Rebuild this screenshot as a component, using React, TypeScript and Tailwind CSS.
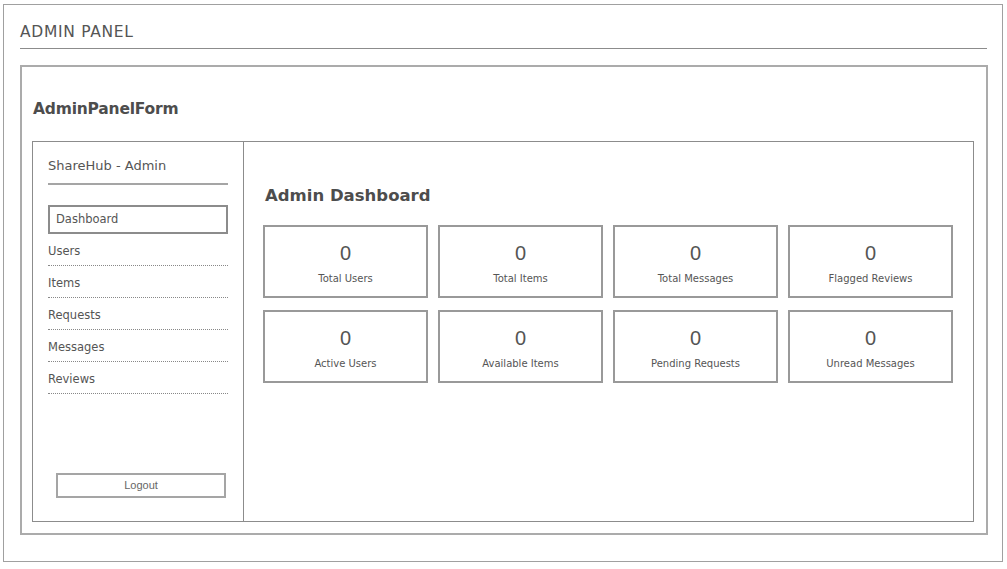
import React from 'react';

const stats = [
  { value: 0, label: 'Total Users' },
  { value: 0, label: 'Total Items' },
  { value: 0, label: 'Total Messages' },
  { value: 0, label: 'Flagged Reviews' },
  { value: 0, label: 'Active Users' },
  { value: 0, label: 'Available Items' },
  { value: 0, label: 'Pending Requests' },
  { value: 0, label: 'Unread Messages' },
];

const navItems = ['Users', 'Items', 'Requests', 'Messages', 'Reviews'];

const sketch = "font-['Comic_Sans_MS','DejaVu_Sans',sans-serif]";

export default function App() {
  return (
    <div className={`w-[1007px] h-[569px] bg-white pt-[4px] pl-[3px] text-[#555] ${sketch}`}>
      <div className="w-[1000px] h-[558px] border border-[#a0a0a0] flex flex-col px-[16px]">
        {/* Header */}
        <div className="h-[44px] border-b border-[#8c8c8c] flex items-end pb-[8px] w-[967px]">
          <span className="text-[15.5px] leading-none tracking-[0.7px]">ADMIN PANEL</span>
        </div>

        {/* Form */}
        <div className="mt-[16px] w-[968px] h-[470px] border-2 border-[#ababab] flex flex-col px-[10px]">
          <div className="h-[74px] pt-[35px]">
            <h1 className="text-[15.5px] font-bold leading-none text-[#4d4d4d] pl-[1px] tracking-[-0.2px]">AdminPanelForm</h1>
          </div>

          <div className="w-[942px] h-[381px] border border-[#8c8c8c] flex">
            {/* Sidebar */}
            <aside className="w-[211px] border-r border-[#8c8c8c] flex flex-col pl-[15px]">
              <div className="h-[43px] w-[180px] border-b-2 border-[#a5a5a5] flex items-end pb-[11px]">
                <span className="text-[13px] leading-none">ShareHub - Admin</span>
              </div>
              <div className="mt-[20px] w-[180px] h-[29px] border-2 border-[#8c8c8c] flex items-center pl-[6px]">
                <span className="text-[11.5px] leading-none">Dashboard</span>
              </div>
              {navItems.map((item) => (
                <div
                  key={item}
                  className="h-[32px] w-[180px] border-b border-dotted border-[#888] flex items-end pb-[8px]"
                >
                  <span className="text-[11.5px] leading-none">{item}</span>
                </div>
              ))}
              <div className="flex-1" />
              <button className="ml-[8px] mb-[23px] w-[170px] h-[25px] border-2 border-[#a5a5a5] bg-white text-[11px] text-[#666] font-['Liberation_Sans',Arial,sans-serif]">
                Logout
              </button>
            </aside>

            {/* Main */}
            <main className="flex-1 flex flex-col pl-[20px]">
              <div className="h-[64px] flex items-end pb-[2px] pl-[1px]">
                <h2 className="text-[16.5px] font-bold leading-none text-[#4d4d4d]">Admin Dashboard</h2>
              </div>
              <div className="mt-[19px] -ml-[1px] grid grid-cols-[165px_165px_165px_165px] gap-x-[10px] gap-y-[12px]">
                {stats.map((s) => (
                  <div
                    key={s.label}
                    className="h-[73px] border-2 border-[#999] flex flex-col items-center pt-[16px]"
                  >
                    <span className="text-[20px] leading-none text-[#555] font-['Liberation_Sans',Arial,sans-serif]">{s.value}</span>
                    <span className="mt-[11px] text-[10px] leading-none">{s.label}</span>
                  </div>
                ))}
              </div>
            </main>
          </div>
        </div>
      </div>
    </div>
  );
}
